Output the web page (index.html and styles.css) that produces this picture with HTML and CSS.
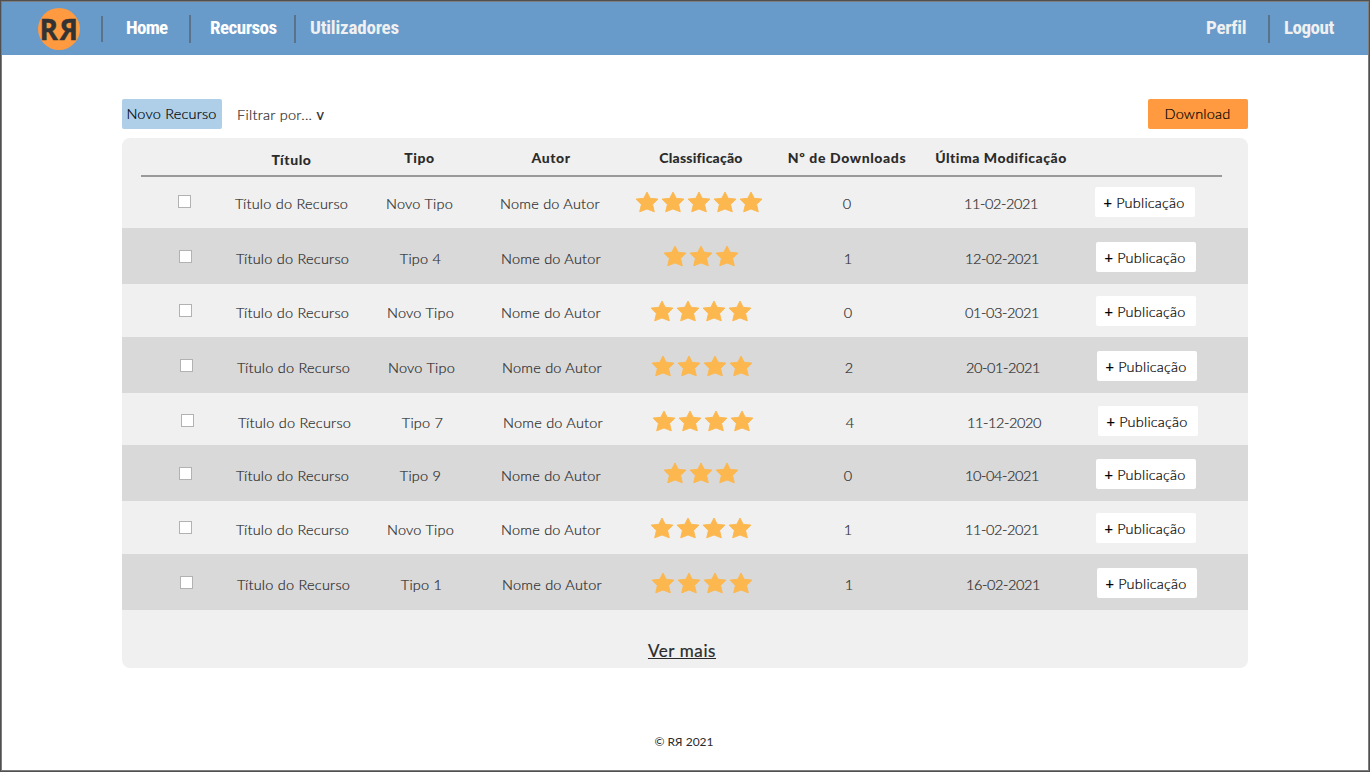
FILE: index.html
```html
<!DOCTYPE html>
<html lang="pt">
<head>
<meta charset="utf-8">
<title>Recursos</title>
<link rel="stylesheet" href="styles.css">
</head>
<body>
<svg class="defs" aria-hidden="true"><symbol id="star" viewBox="0 0 24 22"><path d="M12 1 L15.2 7.3 L23 8.1 L17.6 13.5 L19.3 20.8 L12 18 L4.7 20.8 L6.4 13.5 L1 8.1 L8.8 7.3 Z"/></symbol></svg>
<div class="window">
<header class="bar">
<div class="logo"><span>R</span><span class="flip">R</span></div>
<i class="sep short"></i><a class="home">Home</a><i class="sep"></i><a class="resources">Recursos</a><i class="sep"></i><a class="users">Utilizadores</a>
<a class="profile">Perfil</a><i class="sep"></i><a class="logout">Logout</a>
</header>
<main>
<div class="tools"><button class="btn new">Novo Recurso</button><span class="filter">Filtrar por... <b>v</b></span><button class="btn download">Download</button></div>
<section class="table">
<div class="grid head"><span></span><span class="low">Título</span><span>Tipo</span><span class="author">Autor</span><span class="rating">Classificação</span><span class="count">Nº de Downloads</span><span class="modified">Última Modificação</span></div>
<div class="grid row r1"><input type="checkbox"><span>Título do Recurso</span><span>Novo Tipo</span><span>Nome do Autor</span><div class="stars"><svg><use href="#star"/></svg><svg><use href="#star"/></svg><svg><use href="#star"/></svg><svg><use href="#star"/></svg><svg><use href="#star"/></svg></div><span>0</span><span class="date">11-02-2021</span><button class="btn pub"><b>+</b> Publicação</button></div>
<div class="grid row r2"><input type="checkbox"><span>Título do Recurso</span><span>Tipo 4</span><span>Nome do Autor</span><div class="stars"><svg><use href="#star"/></svg><svg><use href="#star"/></svg><svg><use href="#star"/></svg></div><span>1</span><span class="date">12-02-2021</span><button class="btn pub"><b>+</b> Publicação</button></div>
<div class="grid row r3"><input type="checkbox"><span>Título do Recurso</span><span>Novo Tipo</span><span>Nome do Autor</span><div class="stars"><svg><use href="#star"/></svg><svg><use href="#star"/></svg><svg><use href="#star"/></svg><svg><use href="#star"/></svg></div><span>0</span><span class="date">01-03-2021</span><button class="btn pub"><b>+</b> Publicação</button></div>
<div class="grid row r4"><input type="checkbox"><span>Título do Recurso</span><span>Novo Tipo</span><span>Nome do Autor</span><div class="stars"><svg><use href="#star"/></svg><svg><use href="#star"/></svg><svg><use href="#star"/></svg><svg><use href="#star"/></svg></div><span>2</span><span class="date">20-01-2021</span><button class="btn pub"><b>+</b> Publicação</button></div>
<div class="grid row r5"><input type="checkbox"><span>Título do Recurso</span><span>Tipo 7</span><span>Nome do Autor</span><div class="stars"><svg><use href="#star"/></svg><svg><use href="#star"/></svg><svg><use href="#star"/></svg><svg><use href="#star"/></svg></div><span>4</span><span class="date">11-12-2020</span><button class="btn pub"><b>+</b> Publicação</button></div>
<div class="grid row r6"><input type="checkbox"><span>Título do Recurso</span><span>Tipo 9</span><span>Nome do Autor</span><div class="stars"><svg><use href="#star"/></svg><svg><use href="#star"/></svg><svg><use href="#star"/></svg></div><span>0</span><span class="date">10-04-2021</span><button class="btn pub"><b>+</b> Publicação</button></div>
<div class="grid row r7"><input type="checkbox"><span>Título do Recurso</span><span>Novo Tipo</span><span>Nome do Autor</span><div class="stars"><svg><use href="#star"/></svg><svg><use href="#star"/></svg><svg><use href="#star"/></svg><svg><use href="#star"/></svg></div><span>1</span><span class="date">11-02-2021</span><button class="btn pub"><b>+</b> Publicação</button></div>
<div class="grid row r8"><input type="checkbox"><span>Título do Recurso</span><span>Tipo 1</span><span>Nome do Autor</span><div class="stars"><svg><use href="#star"/></svg><svg><use href="#star"/></svg><svg><use href="#star"/></svg><svg><use href="#star"/></svg></div><span>1</span><span class="date">16-02-2021</span><button class="btn pub"><b>+</b> Publicação</button></div>
<div class="more"><a>Ver mais</a></div>
</section>
</main>
<footer>© R<span class="flip">R</span> 2021</footer>
</div>
</body>
</html>
```
FILE: styles.css
```css
* { box-sizing: border-box; }
body { margin: 0; font-family: Lato, "Open Sans", sans-serif; color: #2b2b2b; }
.defs { display: none; }
.window { width: 1370px; height: 772px; border: 1px solid #505050; outline: 1px solid #7d7d7d; outline-offset: -2px; background: #fff; overflow: hidden; }
.bar { height: 54px; background: #699bca; display: flex; align-items: center; padding: 0 35px 0 37px; font: bold 19px "Liberation Sans Narrow", "Roboto Condensed", "Open Sans", sans-serif; font-stretch: condensed; color: #f0f0f0; white-space: nowrap; letter-spacing: -0.3px; }
.bar a { padding-bottom: 2px; }
.logo { width: 42px; height: 42px; margin: 2px 21px 0 0; border-radius: 50%; background: #ff9a40; color: #333; font: bold 28px "Open Sans", sans-serif; display: flex; align-items: center; justify-content: center; letter-spacing: -1px; }
.logo span { display: block; width: 18px; margin-left: -1px; -webkit-text-stroke: 0.4px; }
.logo .flip { margin-left: 2px; }
.flip { display: inline-block; transform: scaleX(-1); }
.sep { width: 2px; height: 28px; margin-top: 2px; background: #5b728b; }
.short { height: 26px; }
.home { width: 86px; padding-left: 23px; color: #fff; letter-spacing: -0.7px; }
.resources { width: 103px; padding-left: 19px; color: #fff; letter-spacing: -0.5px; }
.users { padding-left: 14px; letter-spacing: -0.2px; }
.profile { margin-left: auto; width: 62px; }
.logout { width: 64px; padding-left: 14px; letter-spacing: -0.5px; }
main { width: 1126px; margin: 44px 0 0 121px; }
.tools { height: 39px; display: flex; align-items: flex-start; }
.btn { width: 100px; height: 30px; border: 0; border-radius: 2px; padding: 0; font: 300 14.5px Lato, sans-serif; letter-spacing: 0.2px; color: #000; white-space: nowrap; -webkit-text-stroke: 0.2px; }
.tools .btn { padding: 0 1px 2px 0; }
.new { background: #afcfe9; }
.filter { margin-left: 15px; font-size: 14.5px; font-weight: 300; line-height: 32px; letter-spacing: 0.3px; -webkit-text-stroke: 0.2px; }
.download { background: #ff9a40; margin-left: auto; }
.table { height: 530px; background: #f0f0f0; border-radius: 8px; overflow: hidden; }
.grid { display: grid; grid-template-columns: 55px 159px 97px 164px 136px 158px 150px 100px; padding-left: 35px; align-items: start; text-align: center; white-space: nowrap; }
.grid > :nth-child(8) { margin-left: 19px; }
.head { height: 39px; font-size: 14px; font-weight: 900; line-height: 40px; letter-spacing: 0.6px; position: relative; }
.head::after { content: ""; position: absolute; left: 19px; right: 26px; bottom: 0; height: 2px; background: #999; }
.head .low { padding-top: 2px; }
.head .author { padding-left: 2px; }
.head .rating { padding-left: 2px; letter-spacing: 0.2px; }
.head .modified { letter-spacing: 0.5px; }
.row { height: 55px; font-size: 14.5px; font-weight: 300; line-height: 30px; letter-spacing: 0.23px; }
.row > span { padding-top: 2px; -webkit-text-stroke: 0.2px; }
.row .date { letter-spacing: -0.38px; }
.row input { appearance: none; width: 13px; height: 13px; margin: 8px auto 0; border: 1px solid #b2b2b2; background: #fff; }
.stars { display: flex; justify-content: center; gap: 2px; height: 30px; padding-top: 4px; }
.stars svg { width: 24px; height: 22px; overflow: visible; fill: #fcb74e; stroke: #fcb74e; stroke-width: 0.9; stroke-linejoin: round; }
.pub { background: #fff; padding-right: 2px; }
.r1 { height: 51px; padding-top: 10px; }
.r2 { height: 56px; padding-top: 14px; padding-left: 36px; }
.r3 { height: 53px; padding-top: 12px; padding-left: 36px; }
.r4 { height: 56px; padding-top: 14px; padding-left: 37px; }
.r5 { height: 52px; padding-top: 13px; padding-left: 38px; }
.r6 { height: 56px; padding-top: 14px; padding-left: 36px; }
.r7 { height: 53px; padding-top: 12px; padding-left: 36px; }
.r8 { height: 56px; padding-top: 14px; padding-left: 37px; }
.r1 .stars { margin-left: -1px; margin-right: 1px; }
.r2 .stars, .r6 .stars { padding-top: 3px; }
.r2, .r4, .r6, .r8 { background: #d9d9d9; }
.more { padding: 30px 6px 0 0; text-align: center; font-size: 17px; line-height: 22px; text-decoration: underline; letter-spacing: 0.6px; -webkit-text-stroke: 0.2px; }
footer { margin-top: 64px; padding-right: 2px; text-align: center; font-size: 12px; line-height: 20px; }
```
